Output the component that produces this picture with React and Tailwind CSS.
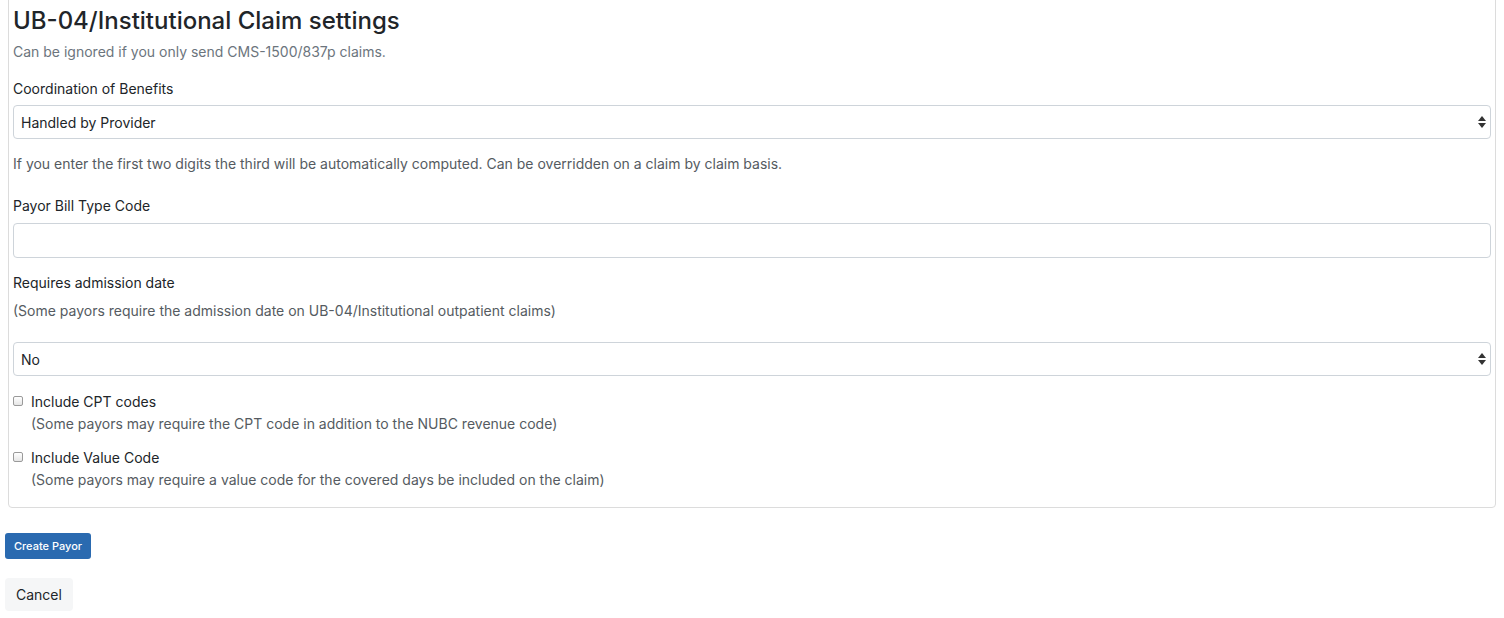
const font = { fontFamily: 'Inter, "Liberation Sans", sans-serif' };

const SelectBox = ({ value }) => (
  <div className="flex h-[34px] items-center justify-between rounded-[4px] border border-[#ced4da] bg-white pl-[7px] pr-[4px] text-[14px] text-[#212529]">
    <span>{value}</span>
    <span className="flex flex-col items-center leading-none">
      <svg width="8" height="5" viewBox="0 0 8 5"><path d="M4 0 L8 5 L0 5 Z" fill="#333" /></svg>
      <svg width="8" height="5" viewBox="0 0 8 5" className="mt-[2px]"><path d="M0 0 L8 0 L4 5 Z" fill="#333" /></svg>
    </span>
  </div>
);

const CheckRow = ({ label, help }) => (
  <div className="flex items-start gap-[8px]">
    <span className="mt-[4px] h-[10px] w-[10px] shrink-0 rounded-[2px] border border-[#9a9a9a] bg-gradient-to-b from-white to-[#e6e6e6]" />
    <div className="flex flex-col">
      <span className="text-[14px] leading-[20px] text-[#212529]">{label}</span>
      <span className="mt-[2px] text-[14px] leading-[20px] text-[#555b61]">{help}</span>
    </div>
  </div>
);

export default function App() {
  return (
    <div className="min-h-screen bg-white pr-[8px]" style={font}>
      <div className="ml-[8px] mt-[-6px] rounded-b-[4px] border border-[#dcdcdc] px-[4px] pb-[17px] pt-[12px]">
        <h2 className="text-[24px] font-medium leading-[28px] text-[#212529]">UB-04/Institutional Claim settings</h2>
        <p className="mt-[7px] text-[14px] leading-[20px] text-[#6c757d]">Can be ignored if you only send CMS-1500/837p claims.</p>

        <label className="mt-[17px] block text-[14px] leading-[20px] text-[#212529]">Coordination of Benefits</label>
        <div className="mt-[6px]">
          <SelectBox value="Handled by Provider" />
        </div>
        <p className="mt-[15px] text-[14px] leading-[20px] text-[#555b61]">If you enter the first two digits the third will be automatically computed. Can be overridden on a claim by claim basis.</p>

        <label className="mt-[22px] block text-[14px] leading-[20px] text-[#212529]">Payor Bill Type Code</label>
        <div className="mt-[7px] h-[35px] rounded-[4px] border border-[#ced4da] bg-white" />

        <label className="mt-[15px] block text-[14px] leading-[20px] text-[#212529]">Requires admission date</label>
        <p className="mt-[8px] text-[14px] leading-[20px] text-[#555b61]">(Some payors require the admission date on UB-04/Institutional outpatient claims)</p>
        <div className="mt-[21px]">
          <SelectBox value="No" />
        </div>

        <div className="mt-[16px] flex flex-col gap-[14px]">
          <CheckRow label="Include CPT codes" help="(Some payors may require the CPT code in addition to the NUBC revenue code)" />
          <CheckRow label="Include Value Code" help="(Some payors may require a value code for the covered days be included on the claim)" />
        </div>
      </div>

      <div className="ml-[5px] mt-[25px] flex flex-col items-start gap-[19px]">
        <button className="h-[26px] rounded-[3px] bg-[#2a6ab0] px-[9px] text-[11px] font-medium text-white">Create Payor</button>
        <button className="h-[33px] rounded-[4px] bg-[#f5f6f7] px-[11px] text-[14px] text-[#212529]">Cancel</button>
      </div>
    </div>
  );
}
